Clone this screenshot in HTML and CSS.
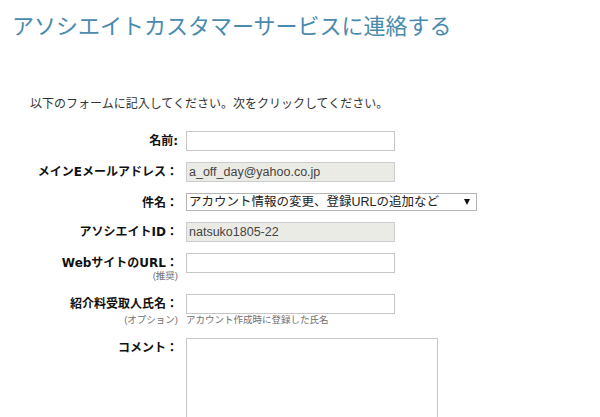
FILE: index.html
```
<!DOCTYPE html>
<html lang="ja">
<head>
<meta charset="utf-8">
<title>アソシエイトカスタマーサービスに連絡する</title>
<link rel="stylesheet" href="styles.css">
</head>
<body>
<div class="page">
  <h1 class="title">アソシエイトカスタマーサービスに連絡する</h1>
  <p class="intro">以下のフォームに記入してください。次をクリックしてください。</p>
  <form class="form">
    <div class="row">
      <div class="label-col"><span class="label">名前:</span></div>
      <div class="field-col"><input class="text" type="text"></div>
    </div>
    <div class="row">
      <div class="label-col"><span class="label">メインEメールアドレス：</span></div>
      <div class="field-col"><input class="text readonly" type="text" value="a_off_day@yahoo.co.jp" readonly></div>
    </div>
    <div class="row">
      <div class="label-col"><span class="label">件名：</span></div>
      <div class="field-col">
        <div class="select-wrap">
          <select class="select"><option>アカウント情報の変更、登録URLの追加など</option></select>
          <span class="arrow"></span>
        </div>
      </div>
    </div>
    <div class="row">
      <div class="label-col"><span class="label">アソシエイトID：</span></div>
      <div class="field-col"><input class="text readonly" type="text" value="natsuko1805-22" readonly></div>
    </div>
    <div class="row row-url">
      <div class="label-col">
        <span class="label">WebサイトのURL：</span>
        <span class="note">(推奨)</span>
      </div>
      <div class="field-col"><input class="text" type="text"></div>
    </div>
    <div class="row row-ref">
      <div class="label-col">
        <span class="label label-ref">紹介料受取人氏名：</span>
        <span class="note">(オプション)</span>
      </div>
      <div class="field-col">
        <input class="text" type="text">
        <span class="note">アカウント作成時に登録した氏名</span>
      </div>
    </div>
    <div class="row">
      <div class="label-col"><span class="label">コメント：</span></div>
      <div class="field-col"><textarea class="comment"></textarea></div>
    </div>
  </form>
</div>
</body>
</html>
```
FILE: styles.css
```
html, body {
  margin: 0;
  padding: 0;
  background: #ffffff;
}

body {
  font-family: "Noto Sans CJK JP", "Noto Sans", sans-serif;
  color: #222222;
  overflow: hidden;
}

.page {
  padding-top: 8px;
}

.title {
  margin: 0 0 0 12px;
  font-size: 22px;
  line-height: 32px;
  font-weight: normal;
  color: #4a8bad;
  white-space: nowrap;
}

.intro {
  margin: 55px 0 0 30px;
  font-size: 12px;
  line-height: 16px;
  color: #333333;
}

.form {
  margin-top: 20px;
}

.row {
  display: flex;
  align-items: flex-start;
  margin-bottom: 11px;
}

.row-url {
  margin-bottom: 12px;
}

.row-ref {
  margin-bottom: 12px;
}

.label-col {
  width: 178px;
  height: auto;
  display: flex;
  flex-direction: column;
  align-items: flex-end;
  text-align: right;
}

.field-col {
  margin-left: 8px;
  display: flex;
  flex-direction: column;
}

.label {
  display: block;
  height: 14px;
  padding-top: 3px;
  font-family: "DejaVu Sans", "Noto Sans CJK JP", sans-serif;
  font-weight: bold;
  font-size: 12px;
  line-height: 14px;
  color: #111111;
  white-space: nowrap;
}

.label-ref {
  padding-bottom: 3px;
}

.note {
  display: block;
  height: 12px;
  font-family: "Liberation Sans", "Noto Sans CJK JP", sans-serif;
  font-size: 9.5px;
  line-height: 12px;
  color: #6f6f6f;
  white-space: nowrap;
}

.text {
  box-sizing: border-box;
  display: block;
  width: 209px;
  height: 20px;
  margin: 0;
  padding: 0 2px;
  border: 1px solid #c6c6c6;
  background: #ffffff;
  font-family: "Liberation Sans", "Noto Sans CJK JP", sans-serif;
  font-size: 12.5px;
  color: #444444;
  outline: none;
}

.readonly {
  background: #ebebe6;
  border-color: #cccccc;
}

.select-wrap {
  position: relative;
  width: 291px;
  height: 18px;
}

.select {
  box-sizing: border-box;
  display: block;
  width: 291px;
  height: 18px;
  margin: 0;
  padding: 0 0 0 2px;
  border: 1px solid #b4b4b4;
  border-radius: 0;
  background: #ffffff;
  appearance: none;
  -webkit-appearance: none;
  font-family: "Liberation Sans", "Noto Sans CJK JP", sans-serif;
  font-size: 12.5px;
  line-height: 16px;
  color: #222222;
}

.arrow {
  position: absolute;
  right: 7px;
  top: 6px;
  width: 0;
  height: 0;
  border-left: 3px solid transparent;
  border-right: 3px solid transparent;
  border-top: 6px solid #111111;
}

.comment {
  box-sizing: border-box;
  display: block;
  width: 252px;
  height: 120px;
  margin: 0;
  border: 1px solid #c6c6c6;
  resize: none;
  outline: none;
}
```
